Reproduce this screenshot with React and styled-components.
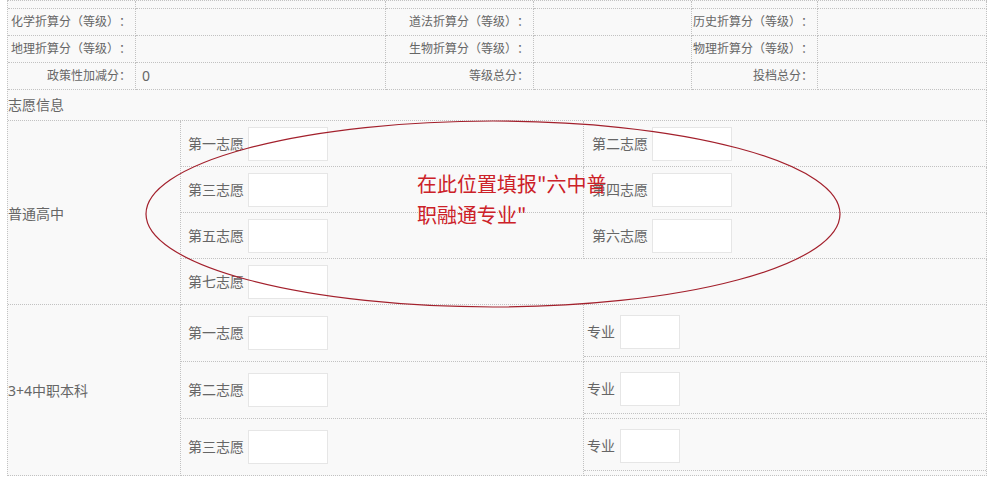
import React from 'react';
import styled, { createGlobalStyle } from 'styled-components';

const line = '1px dotted #c2c2c2';
const ink = '#666';
const annotationRed = '#cc2128';

const GlobalStyle = createGlobalStyle`
  html, body {
    margin: 0;
    padding: 0;
    background: #fff;
  }
  body {
    font-family: "Noto Sans", "Noto Sans CJK SC", sans-serif;
    color: ${ink};
    text-spacing-trim: space-all;
  }
`;

const Page = styled.div`
  position: relative;
  width: 992px;
  height: 480px;
  overflow: hidden;
  padding-left: 7px;
  box-sizing: border-box;
`;

const Sheet = styled.div`
  width: 980px;
  background: #f9f9f9;
  border-left: ${line};
  border-top: ${line};
  box-sizing: border-box;
`;

const ScoreGrid = styled.div`
  display: grid;
  grid-template-columns: 128px 250px 148px 158px 126px 169px;
  grid-template-rows: 8px;
  grid-auto-rows: 27px;
`;

const Cell = styled.div`
  box-sizing: border-box;
  border-right: ${line};
  border-bottom: ${line};
  min-width: 0;
`;

const LabelCell = styled(Cell)`
  text-align: right;
  padding-right: 4px;
  font-size: 12px;
  line-height: 26px;
  white-space: nowrap;
`;

const ValueCell = styled(Cell)`
  padding-left: 6px;
  font-size: 14px;
  line-height: 26px;
`;

const SectionTitle = styled(Cell)`
  height: 31px;
  font-size: 14px;
  line-height: 30px;
`;

const WishGrid = styled.div`
  display: grid;
  grid-template-columns: 173px 403px 403px;
  grid-auto-rows: ${p => p.$rowHeight}px;
`;

const GroupCell = styled(Cell)`
  grid-row: span ${p => p.$rows};
  display: flex;
  align-items: center;
  font-size: 14px;
`;

const WishCell = styled(Cell)`
  grid-column: span ${p => (p.$wide ? 2 : 1)};
  display: flex;
  align-items: center;
  gap: 4px;
  padding-left: ${p => p.$pad}px;
`;

const WishLabel = styled.span`
  font-size: 14px;
  line-height: 20px;
  white-space: nowrap;
`;

const TextBox = styled.input`
  width: ${p => p.$w}px;
  height: 34px;
  margin: 0;
  padding: 0 6px;
  box-sizing: border-box;
  border: 1px solid #e6e6e6;
  background: #fff;
  outline: none;
  font: inherit;
`;

const MajorCell = styled(Cell)`
  display: flex;
  flex-direction: column;
`;

const MajorBox = styled.div`
  height: 52px;
  box-sizing: border-box;
  border-bottom: ${line};
  display: flex;
  align-items: flex-start;
  gap: 5px;
  padding: 10px 0 0 3px;
  ${WishLabel} {
    line-height: 34px;
  }
`;

const Ring = styled.svg`
  position: absolute;
  left: 144px;
  top: 119px;
  pointer-events: none;
`;

const Note = styled.div`
  position: absolute;
  left: 417px;
  top: 168px;
  color: ${annotationRed};
  font-family: "Noto Sans CJK SC", sans-serif;
  font-size: 20px;
  line-height: 31px;
  white-space: nowrap;
`;

const scoreRows = [
  ['化学折算分（等级）：', '', '道法折算分（等级）：', '', '历史折算分（等级）：', ''],
  ['地理折算分（等级）：', '', '生物折算分（等级）：', '', '物理折算分（等级）：', ''],
  ['政策性加减分：', '0', '等级总分：', '', '投档总分：', ''],
];

const highSchool = [
  ['第一志愿', '第二志愿'],
  ['第三志愿', '第四志愿'],
  ['第五志愿', '第六志愿'],
  ['第七志愿'],
];

const vocational = ['第一志愿', '第二志愿', '第三志愿'];

export default function App() {
  return (
    <Page>
      <GlobalStyle />
      <Sheet>
        <ScoreGrid>
          {[0, 1, 2, 3, 4, 5].map(i => (
            <Cell key={'g' + i} />
          ))}
          {scoreRows.map((row, r) =>
            row.map((text, c) =>
              c % 2 === 0 ? (
                <LabelCell key={r + '-' + c}>{text}</LabelCell>
              ) : (
                <ValueCell key={r + '-' + c}>{text}</ValueCell>
              )
            )
          )}
        </ScoreGrid>

        <SectionTitle>志愿信息</SectionTitle>

        <WishGrid $rowHeight={46}>
          <GroupCell $rows={4}>普通高中</GroupCell>
          {highSchool.map(pair =>
            pair.map((label, i) => (
              <WishCell key={label} $pad={i === 0 ? 7 : 8} $wide={pair.length === 1}>
                <WishLabel>{label}</WishLabel>
                <TextBox $w={80} />
              </WishCell>
            ))
          )}
        </WishGrid>

        <WishGrid $rowHeight={57}>
          <GroupCell $rows={3}>3+4中职本科</GroupCell>
          {vocational.map(label => (
            <React.Fragment key={label}>
              <WishCell $pad={7}>
                <WishLabel>{label}</WishLabel>
                <TextBox $w={80} />
              </WishCell>
              <MajorCell>
                <MajorBox>
                  <WishLabel>专业</WishLabel>
                  <TextBox $w={60} />
                </MajorBox>
              </MajorCell>
            </React.Fragment>
          ))}
        </WishGrid>
      </Sheet>

      <Ring width="698" height="190" viewBox="0 0 698 190">
        <ellipse cx="349" cy="95" rx="347" ry="93" fill="none" stroke="#a3202c" strokeWidth="1.2" />
      </Ring>
      <Note>
        在此位置填报"六中普
        <br />
        职融通专业"
      </Note>
    </Page>
  );
}
